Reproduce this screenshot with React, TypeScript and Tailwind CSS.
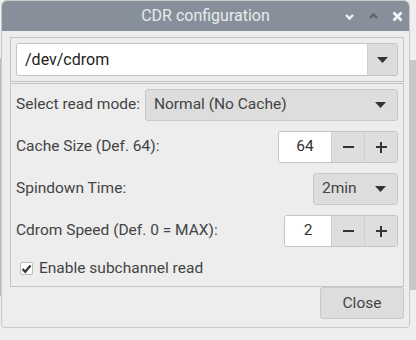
import React from 'react';

const Arrow: React.FC = () => (
  <svg width="11" height="6" viewBox="0 0 11 6" className="shrink-0">
    <path d="M0 0 H11 L5.5 6 Z" fill="#333" />
  </svg>
);

const Spin: React.FC<{ value: string; entryW: string }> = ({ value, entryW }) => (
  <div className="flex h-[32px] border border-[#c4c4c4] rounded-[3px] overflow-hidden">
    <div className={`${entryW} bg-white flex items-center justify-center text-[#333]`}>{value}</div>
    <div className="w-[33px] bg-[#dedede] border-l border-[#cfcfcf] flex items-center justify-center">
      <div className="w-[11px] h-[2px] bg-[#333]" />
    </div>
    <div className="w-[33px] bg-[#dedede] border-l border-[#cfcfcf] flex items-center justify-center relative">
      <div className="w-[11px] h-[2px] bg-[#333]" />
      <div className="absolute w-[2px] h-[11px] bg-[#333]" />
    </div>
  </div>
);

const App: React.FC = () => {
  return (
    <div className="relative w-[416px] h-[340px] bg-[#eeeeee] overflow-hidden font-['Roboto',sans-serif] text-[15.5px] text-[#444]">
      {/* windows behind */}
      <div className="absolute left-0 top-[58px] w-[3px] h-[238px] bg-[#bdbdbd]" />
      <div className="absolute right-0 top-[60px] w-[6px] h-[230px] bg-[#c8c8c8]" />

      <div className="relative ml-[1px] w-[409px] h-[328px] flex flex-col bg-[#ededed] border border-[#c9c9c9] rounded-t-[6px] rounded-b-[4px] overflow-hidden">
        <div className="h-[30px] shrink-0 bg-[#87909a] relative flex items-center justify-center text-[16px] text-[#e8ebee]">
          CDR configuration
          <svg className="absolute left-[342px] top-[12px]" width="11" height="8" viewBox="0 0 11 8">
            <path d="M2 2 L5.5 5.5 L9 2" stroke="#f2f2f2" strokeWidth="2.4" fill="none" />
          </svg>
          <svg className="absolute left-[366px] top-[11px]" width="11" height="8" viewBox="0 0 11 8">
            <path d="M2 6 L5.5 2.5 L9 6" stroke="#5d656c" strokeWidth="2.4" fill="none" />
          </svg>
          <svg className="absolute left-[390px] top-[10px]" width="11" height="11" viewBox="0 0 11 11">
            <path d="M1.5 1.5 L9.5 9.5 M9.5 1.5 L1.5 9.5" stroke="#f7f7f7" strokeWidth="2.6" fill="none" />
          </svg>
        </div>

        <div className="flex flex-col pl-[8px] pr-[5px] pt-[6px]">
          <div className="border border-[#c4c4c4] p-[5px]">
            <div className="flex h-[33px] border border-[#c4c4c4] rounded-[3px] overflow-hidden">
              <div className="flex-1 bg-white flex items-center pl-[8px] text-[16px] text-[#222]">/dev/cdrom</div>
              <div className="w-[30px] bg-[#dcdcdc] border-l border-[#cfcfcf] flex items-center justify-center">
                <Arrow />
              </div>
            </div>
          </div>

          <div className="mt-[1px] border border-[#c4c4c4] px-[5px] pt-[5px] pb-[6px] flex flex-col gap-[10px]">
            <div className="flex items-center gap-[5px]">
              <span>Select read mode:</span>
              <div className="flex-1 h-[32px] bg-[#dddddd] border border-[#c8c8c8] rounded-[3px] flex items-center justify-between pl-[8px] pr-[11px]">
                <span>Normal (No Cache)</span>
                <Arrow />
              </div>
            </div>
            <div className="flex items-center justify-between">
              <span>Cache Size (Def. 64):</span>
              <Spin value="64" entryW="w-[52px]" />
            </div>
            <div className="flex items-center justify-between">
              <span>Spindown Time:</span>
              <div className="w-[85px] h-[32px] bg-[#dddddd] border border-[#c8c8c8] rounded-[3px] flex items-center justify-between pl-[8px] pr-[11px]">
                <span>2min</span>
                <Arrow />
              </div>
            </div>
            <div className="flex items-center justify-between">
              <span>Cdrom Speed (Def. 0 = MAX):</span>
              <Spin value="2" entryW="w-[46px]" />
            </div>
            <label className="flex items-center gap-[6px] pl-[4px]">
              <span className="w-[13px] h-[13px] bg-white border border-[#bbb] rounded-[2px] flex items-center justify-center">
                <svg width="11" height="10" viewBox="0 0 11 10">
                  <path d="M1.5 5 L4.2 7.8 L9.5 1.5" stroke="#333" strokeWidth="2.2" fill="none" />
                </svg>
              </span>
              <span>Enable subchannel read</span>
            </label>
          </div>

          <div className="flex justify-end">
            <button className="w-[84px] h-[32px] bg-[#dddddd] border border-[#c8c8c8] rounded-[3px] text-[#444]">
              Close
            </button>
          </div>
        </div>
      </div>
    </div>
  );
};

export default App;
